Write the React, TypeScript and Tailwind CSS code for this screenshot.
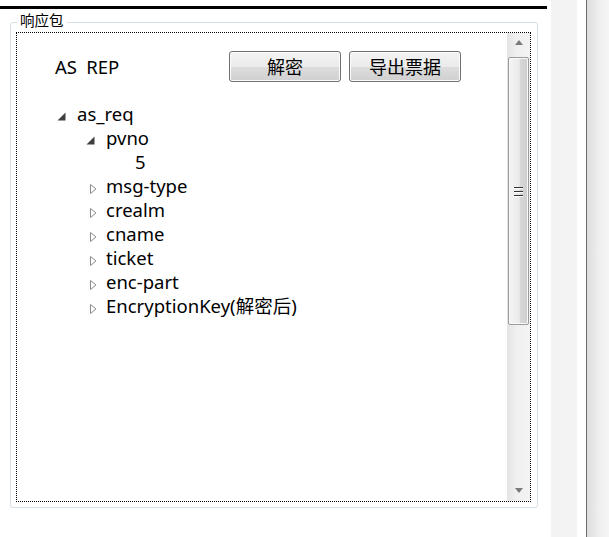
import React from 'react';

type Node = { label: string; level: number; state: 'open' | 'closed' | 'leaf' };

const nodes: Node[] = [
  { label: 'as_req', level: 0, state: 'open' },
  { label: 'pvno', level: 1, state: 'open' },
  { label: '5', level: 2, state: 'leaf' },
  { label: 'msg-type', level: 1, state: 'closed' },
  { label: 'crealm', level: 1, state: 'closed' },
  { label: 'cname', level: 1, state: 'closed' },
  { label: 'ticket', level: 1, state: 'closed' },
  { label: 'enc-part', level: 1, state: 'closed' },
  { label: 'EncryptionKey(解密后)', level: 1, state: 'closed' },
];

const indent = ['pl-[40px]', 'pl-[69px]', 'pl-[98px]'];

function Glyph({ state }: { state: Node['state'] }) {
  return (
    <svg width="20" height="24" viewBox="0 0 20 24" className="shrink-0">
      {state === 'open' && <polygon points="8.5,10.5 8.5,18.5 0.5,18.5" fill="#3f3f3f" />}
      {state === 'closed' && (
        <path d="M4.5,10.5 L4.5,19.5 L10,15 Z" fill="#fff" stroke="#8e8e8e" strokeWidth="1" />
      )}
    </svg>
  );
}

function WinButton({ children }: { children: React.ReactNode }) {
  return (
    <button className="w-[112px] h-[31px] rounded-[3px] border border-[#707070] bg-[linear-gradient(#f3f3f3_0%,#ebebeb_50%,#dddddd_50%,#d0d0d0_100%)] shadow-[inset_0_0_0_1px_#fbfbfb] text-[18px] leading-none text-black">
      {children}
    </button>
  );
}

function ScrollBar() {
  return (
    <div className="w-[23px] flex flex-col bg-[linear-gradient(to_right,#e4e4e4,#f0f0f0_40%,#f3f3f3)]">
      <div className="h-[17px] flex items-end justify-center pb-[5px]">
        <svg width="8" height="5" viewBox="0 0 8 5">
          <polygon points="4,0 8,5 0,5" fill="#7a7a7a" />
        </svg>
      </div>
      <div className="h-[7px]" />
      <div className="h-[268px] mx-[1px] rounded-[2px] border border-[#9b9b9b] bg-[linear-gradient(to_right,#f4f4f4_0%,#ebebeb_55%,#d8d8d8_56%,#cecece_100%)] shadow-[inset_0_0_0_1px_#f9f9f9] flex flex-col items-center justify-center">
        <div className="w-[9px] h-[1px] bg-[#333333] shadow-[0_1px_0_#ffffff]" />
        <div className="w-[9px] h-[1px] bg-[#333333] shadow-[0_1px_0_#ffffff] mt-[3px]" />
        <div className="w-[9px] h-[1px] bg-[#333333] shadow-[0_1px_0_#ffffff] mt-[3px]" />
      </div>
      <div className="flex-1" />
      <div className="h-[17px] flex items-start justify-center pt-[4px]">
        <svg width="8" height="5" viewBox="0 0 8 5">
          <polygon points="0,0 8,0 4,5" fill="#7a7a7a" />
        </svg>
      </div>
    </div>
  );
}

export default function App() {
  return (
    <div className="w-[609px] h-[537px] bg-white flex overflow-hidden text-black font-['Noto_Sans','Noto_Sans_CJK_SC',sans-serif]">
      <div className="w-[547px] flex flex-col">
        <div className="h-[6px]" />
        <div className="h-[3px] bg-black" />
        <div className="pl-[10px] pt-[13px]">
          <div className="relative w-[528px] h-[486px] border border-[#d5dfe5] rounded-[3px] pl-[5px] pr-[6px] pt-[9px] pb-[5px]">
            <span className="absolute left-[6px] top-[-12px] px-[3px] bg-white text-[14.5px] leading-[18px]">
              响应包
            </span>
            <div className="h-full border border-dotted border-black flex">
              <div className="flex-1 flex flex-col">
                <div className="flex items-center pt-[18px] pl-[38px] pr-[46px]">
                  <span className="text-[18.5px] leading-[31px]">AS{'\u2002'}REP</span>
                  <div className="ml-auto flex gap-[8px]">
                    <WinButton>解密</WinButton>
                    <WinButton>导出票据</WinButton>
                  </div>
                </div>
                <div className="mt-[20px] flex flex-col">
                  {nodes.map((n) => (
                    <div key={n.label} className={`flex h-[24px] ${indent[n.level]}`}>
                      <Glyph state={n.state} />
                      <span className="text-[18.5px] leading-[24px] whitespace-nowrap">{n.label}</span>
                    </div>
                  ))}
                </div>
              </div>
              <ScrollBar />
            </div>
          </div>
        </div>
      </div>
      <div className="w-[4px] bg-white" />
      <div className="w-[26px] bg-[#f3f3f3]" />
      <div className="w-[9px] bg-white" />
      <div className="w-[1px] bg-[#6e6e6e]" />
      <div className="flex-1 bg-[linear-gradient(to_right,#dcdcdc,#eeeeee_50%,#f5f5f5)]" />
    </div>
  );
}
